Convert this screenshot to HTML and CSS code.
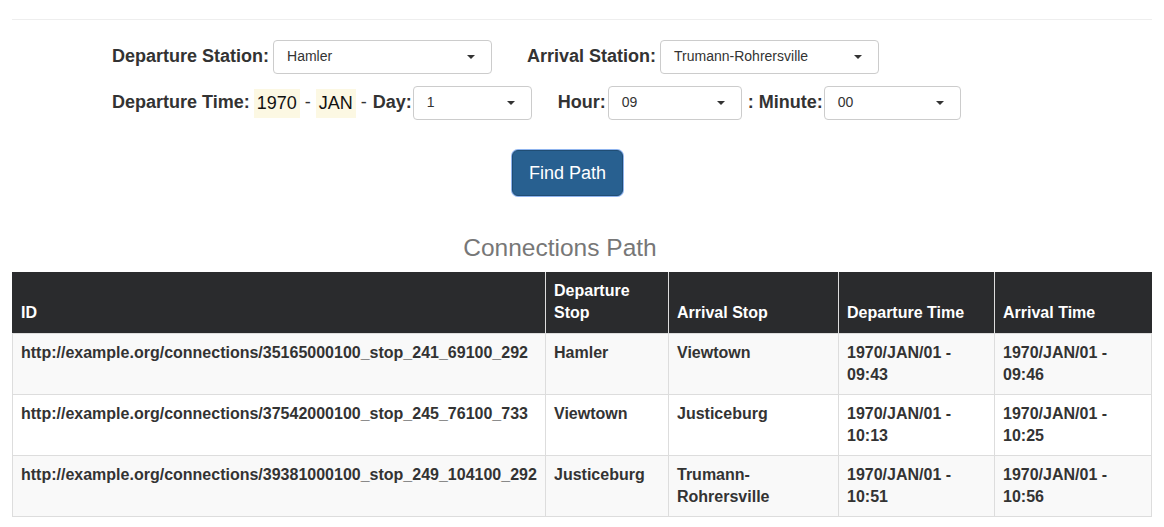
FILE: index.html
```html
<!DOCTYPE html>
<html>
<head>
<meta charset="utf-8">
<title>Connections Path</title>
<link rel="stylesheet" href="styles.css">
</head>
<body>
<div class="page">
  <hr class="top-rule">
  <form class="search">
    <div class="form-row">
      <label class="lbl">Departure Station:</label>
      <div class="select w-station"><span>Hamler</span><i class="caret"></i></div>
      <label class="lbl lbl-arrival">Arrival Station:</label>
      <div class="select w-station"><span>Trumann-Rohrersville</span><i class="caret"></i></div>
    </div>
    <div class="form-row row-two">
      <label class="lbl">Departure Time:</label>
      <mark class="fixed">1970</mark>
      <span class="dash">-</span>
      <mark class="fixed">JAN</mark>
      <span class="dash">-</span>
      <label class="lbl lbl-day">Day:</label>
      <div class="select w-day"><span>1</span><i class="caret"></i></div>
      <label class="lbl lbl-hour">Hour:</label>
      <div class="select w-hour"><span>09</span><i class="caret"></i></div>
      <label class="lbl lbl-minute">: Minute:</label>
      <div class="select w-minute"><span>00</span><i class="caret"></i></div>
    </div>
    <div class="actions">
      <button type="button" class="btn-find">Find Path</button>
    </div>
  </form>
  <h3 class="section-title">Connections Path</h3>
  <table class="path-table">
    <thead>
      <tr>
        <th class="c-id">ID</th>
        <th class="c-dep">Departure Stop</th>
        <th class="c-arr">Arrival Stop</th>
        <th class="c-dt">Departure Time</th>
        <th class="c-at">Arrival Time</th>
      </tr>
    </thead>
    <tbody>
      <tr>
        <td>http://example.org/connections/35165000100_stop_241_69100_292</td>
        <td>Hamler</td>
        <td>Viewtown</td>
        <td>1970/JAN/01 - 09:43</td>
        <td>1970/JAN/01 - 09:46</td>
      </tr>
      <tr>
        <td>http://example.org/connections/37542000100_stop_245_76100_733</td>
        <td>Viewtown</td>
        <td>Justiceburg</td>
        <td>1970/JAN/01 - 10:13</td>
        <td>1970/JAN/01 - 10:25</td>
      </tr>
      <tr>
        <td>http://example.org/connections/39381000100_stop_249_104100_292</td>
        <td>Justiceburg</td>
        <td>Trumann-Rohrersville</td>
        <td>1970/JAN/01 - 10:51</td>
        <td>1970/JAN/01 - 10:56</td>
      </tr>
    </tbody>
  </table>
</div>
</body>
</html>
```

FILE: styles.css
```css
* { box-sizing: border-box; }

body {
  margin: 0;
  font-family: "Liberation Sans", Arial, sans-serif;
  font-size: 14px;
  line-height: 1.42857;
  color: #333;
  background: #fff;
}

.page {
  padding: 0 12px;
}

.top-rule {
  margin: 19px 0 0;
  border: 0;
  border-top: 1px solid #eee;
  height: 0;
}

.search {
  padding: 20px 0 0 100px;
}

.form-row {
  display: flex;
  align-items: center;
  height: 34px;
}

.row-two {
  margin-top: 12px;
}

.lbl {
  font-size: 18px;
  font-weight: bold;
  color: #333;
  margin-right: 4px;
  white-space: nowrap;
}

.lbl-arrival { margin-left: 35px; }
.lbl-day { margin-left: 1px; margin-right: 1px; }
.lbl-hour { margin-left: 26px; margin-right: 2px; }
.lbl-minute { margin-left: 6px; margin-right: 1px; }

.fixed {
  font-size: 18px;
  background: #fcf8e3;
  color: #111;
  padding: 3px 3px;
  line-height: 23px;
}

.dash {
  font-size: 18px;
  color: #333;
  margin: 0 5px;
}

.select {
  display: flex;
  align-items: center;
  justify-content: space-between;
  height: 34px;
  padding: 0 12px 0 13px;
  border: 1px solid #ccc;
  border-radius: 4px;
  background: #fff;
  font-size: 14px;
  color: #333;
}

.w-station { width: 219px; }
.w-day { width: 119px; }
.w-hour { width: 134px; }
.w-minute { width: 137px; }

.caret {
  display: block;
  width: 0;
  height: 0;
  margin-right: 4px;
  border-left: 4px solid transparent;
  border-right: 4px solid transparent;
  border-top: 4px solid #333;
}

.actions {
  display: flex;
  justify-content: center;
  padding: 30px 0 0 0;
  margin-left: -129px;
}

.btn-find {
  height: 46px;
  width: 111px;
  padding: 0;
  font-family: "Liberation Sans", Arial, sans-serif;
  font-size: 18px;
  color: #fff;
  background: #286090;
  border: 1px solid #204d74;
  border-radius: 6px;
  box-shadow: 0 0 0 1px #8fb4ee;
}

.section-title {
  margin: 39px 44px 0 0;
  text-align: center;
  font-size: 24.5px;
  font-weight: normal;
  line-height: 26px;
  color: #777;
}

.path-table {
  width: 100%;
  margin-top: 11px;
  border-collapse: collapse;
  table-layout: fixed;
  font-size: 16px;
  font-weight: bold;
  border: 1px solid #ddd;
}

.c-id { width: 533px; }
.c-dep { width: 123px; }
.c-arr { width: 170px; }
.c-dt { width: 156px; }

.path-table th,
.path-table td {
  padding: 8px;
  line-height: 22px;
  text-align: left;
  vertical-align: top;
  border: 1px solid #ddd;
}

.path-table thead th {
  vertical-align: bottom;
  padding-bottom: 9px;
  padding-top: 7px;
  background: #2a2b2d;
  color: #fff;
  border-top-color: #2a2b2d;
  border-bottom: 1px solid #ddd;
}

.path-table thead th:first-child { border-left-color: #2a2b2d; }
.path-table thead th:last-child { border-right-color: #2a2b2d; }

.path-table td {
  color: #333;
}

.path-table tbody tr:nth-child(odd) td {
  background: #f9f9f9;
}
```
